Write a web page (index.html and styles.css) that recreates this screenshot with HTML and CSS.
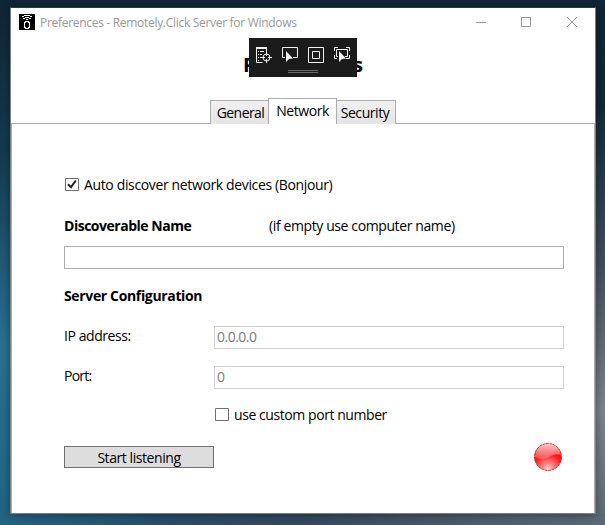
FILE: index.html
```html
<!DOCTYPE html>
<html lang="en">
<head>
<meta charset="utf-8">
<title>Preferences - Remotely.Click Server for Windows</title>
<link rel="stylesheet" href="styles.css">
</head>
<body>
<div class="desktop">
<main class="window">
  <header class="titlebar">
    <svg class="app-icon" width="16" height="16" viewBox="0 0 16 16" shape-rendering="crispEdges"><path fill="#000" d="M0 0h16v16H0z"/><path fill="#fff" d="M5 1h6v1H5zM3 2h2v1H3zM11 2h2v1h-2zM6 3h4v1H6zM4 4h2v1H4zM10 4h2v1h-2zM7 5h2v1H7zM5 8h1v6H5zM10 8h1v6h-1zM6 7h4v1H6zM6 14h4v1H6zM6 8h1v1H6zM9 8h1v1H9zM6 13h1v1H6zM9 13h1v1H9z"/></svg>
    <span class="caption">Preferences - Remotely.Click Server for Windows</span>
    <svg class="controls" width="102" height="12" viewBox="0 0 102 12" fill="none" stroke="#999"><path d="M0 6.500h10M45.500 1.500h9v9h-9z"/><path d="M91 1l10 10M101 1l-10 10"/></svg>
  </header>
  <div class="heading-row">
    <h1>Preferences</h1>
    <div class="debug-bar">
      <svg width="108" height="39" viewBox="0 0 108 39" fill="none" stroke="#f1f1f1"><path d="M7 9.500h11M7 10.500h11M7.500 10v14.500h6M17.500 11v4M9 13.500h1M11 13.500h4M9 16.500h1M11 16.500h2M9 19.500h1M11 19.500h1M9 22.500h1"/><circle cx="17.500" cy="19.500" r="3.500"/><path d="M17.500 14v4M17.500 21v4M12 19.500h4M19 19.500h4"/><path d="M36 19.500h-2.500v-10h15v10H44"/><path fill="#f1f1f1" stroke="none" d="M37 13v11l3-3 4-.5z"/><path d="M59.500 9.500h15v15h-15zM63.500 13.500h7v7h-7z"/><path d="M85.500 13V9.500H89M97 9.500h3.500V13M85.500 17v3.500H88M97 20.500h3.500V17M89 18.500h-1.500v-7h11v7H96"/><path fill="#f1f1f1" stroke="none" d="M90 13v11l3-3 4-.5z"/><path stroke="#686868" d="M39 32.500h30M39 34.500h30"/></svg>
    </div>
  </div>
  <nav class="tabs"><span class="tab general"><b>General</b></span><span class="tab active"><b>Network</b></span><span class="tab security"><b>Security</b></span></nav>
  <section class="panel">
    <label class="check-row auto"><svg class="box" width="14" height="13" viewBox="0 0 14 13"><path d="M.5.500h13v12H.5z" fill="#fff" stroke="#707070"/><path d="M3 6.200l3 3L10.800 2.500" fill="none" stroke="#212121" stroke-width="2"/></svg><span class="t-auto">Auto discover network devices (Bonjour)</span></label>
    <div class="name-row"><strong class="t-disc">Discoverable Name</strong><span class="t-hint">(if empty use computer name)</span></div>
    <div class="input name-input"></div>
    <strong class="section-title">Server Configuration</strong>
    <div class="field"><span>IP address:</span><div class="input disabled">0.0.0.0</div></div>
    <div class="field port"><span class="t-port">Port:</span><div class="input disabled">0</div></div>
    <label class="check-row custom"><svg class="box" width="14" height="13" viewBox="0 0 14 13"><path d="M.5.500h13v12H.5z" fill="#fff" stroke="#707070"/></svg><span>use custom port number</span></label>
    <footer class="actions">
      <div class="button">Start listening</div>
      <svg width="28" height="28" viewBox="0 0 28 28"><defs><radialGradient id="red" cx=".5" cy=".95" r=".75"><stop offset="0" stop-color="#ffdada"/><stop offset=".3" stop-color="#ff8080"/><stop offset=".7" stop-color="#ff2020"/><stop offset="1" stop-color="#f00"/></radialGradient><linearGradient id="shine" x2="0" y2="1"><stop stop-color="#fff" stop-opacity=".85"/><stop offset="1" stop-color="#fff" stop-opacity=".2"/></linearGradient></defs><circle cx="14" cy="14" r="13.500" fill="url(#red)"/><path fill="url(#shine)" d="M1 14a13 13 0 0 1 26-2c-6-2-8 0-12 2s-8 3-14 0z"/><circle cx="14" cy="14" r="13.500" fill="none" stroke="#e01010" stroke-width=".8" stroke-dasharray="3 .6"/></svg>
    </footer>
  </section>
</main>
</div>
</body>
</html>
```
FILE: styles.css
```css
* { box-sizing: border-box; }
body { margin: 0; font: 14px/20px "Open Sans", "Noto Sans", sans-serif; letter-spacing: -.43px; color: #000; }
.desktop { width: 605px; height: 525px; padding: 7px 9px 11px 10px; overflow: hidden; background: linear-gradient(90deg, #226482, #254f6a 25%, #34485e 50%, #4b596b 75%, #5b6a76) 0 100% / 100% 12px no-repeat, linear-gradient(#102536, #132839 20%, #3f4d5b 50%, #79828f 78%, #5b6a76) 100% 0 / 10px 100% no-repeat, linear-gradient(#102435, #153b50 30%, #2a7090 65%, #226482); }
.window { height: 507px; border: 1px solid #7c7f82; border-top-color: #2c3940; background: #fff; white-space: nowrap; box-shadow: 0 1px 8px rgba(0,0,0,.4); }
.titlebar { display: flex; height: 30px; padding: 6px 15px 0 8px; }
.caption { margin-left: 5px; color: #999; font-size: 12px; line-height: 18px; letter-spacing: -.3px; }
.controls { margin: 2px 2px 0 auto; }
.heading-row { position: relative; height: 60px; }
h1 { margin: 0; padding-top: 12px; text-align: center; font-size: 20.2px; line-height: 28px; letter-spacing: 0; }
.debug-bar { position: absolute; left: 238px; top: 0; width: 108px; height: 39px; background: #1b1b1c; }
.debug-bar svg { display: block; }
.tabs { display: flex; align-items: flex-end; height: 26px; margin-bottom: -1px; padding-left: 199px; }
.tab { display: flex; justify-content: center; height: 24px; width: 59px; border: 1px solid #acacac; border-bottom: 0; background: linear-gradient(#f0f0f0, #e5e5e5); line-height: 23px; }
.tab b { font-weight: 400; }
.tab.general { border-right: 0; }
.general b { letter-spacing: -.55px; padding-left: 1px; }
.tab.active { width: 69px; height: 26px; margin-left: -1px; background: #fff; position: relative; line-height: 24px; }
.tab.security { width: 60px; margin-left: -1px; }
.security b { padding-right: 2px; }
.panel { height: 390px; padding: 51px 30px 0 52px; border: 1px solid #acacac; border-bottom: 0; }
.check-row { display: flex; height: 20px; align-items: center; gap: 5px; }
.check-row .box { margin-left: 1px; margin-top: -1px; }
.t-auto { letter-spacing: -.36px; }
.name-row { display: flex; margin-top: 21px; }
.t-disc { width: 205px; letter-spacing: -.48px; }
.t-hint { letter-spacing: -.39px; }
.input { height: 23px; border: 1px solid #abadb3; padding-left: 2px; line-height: 20px; }
.name-input { margin-top: 10px; }
.section-title { display: block; margin-top: 17px; letter-spacing: -.35px; }
.field { display: grid; grid-template-columns: 150px 1fr; margin-top: 20px; line-height: 20px; }
.field.port { margin-top: 17px; }
.t-port { letter-spacing: -.75px; }
.disabled { border-color: #d0d1d4; color: #7c7c7c; letter-spacing: -.5px; }
.custom { margin: 16px 0 0 150px; }
.actions { display: flex; justify-content: space-between; margin-top: 18px; padding-right: 2px; }
.button { width: 150px; height: 22px; margin-top: 3px; border: 1px solid #707070; background: #ddd; text-align: center; line-height: 22px; }
```
